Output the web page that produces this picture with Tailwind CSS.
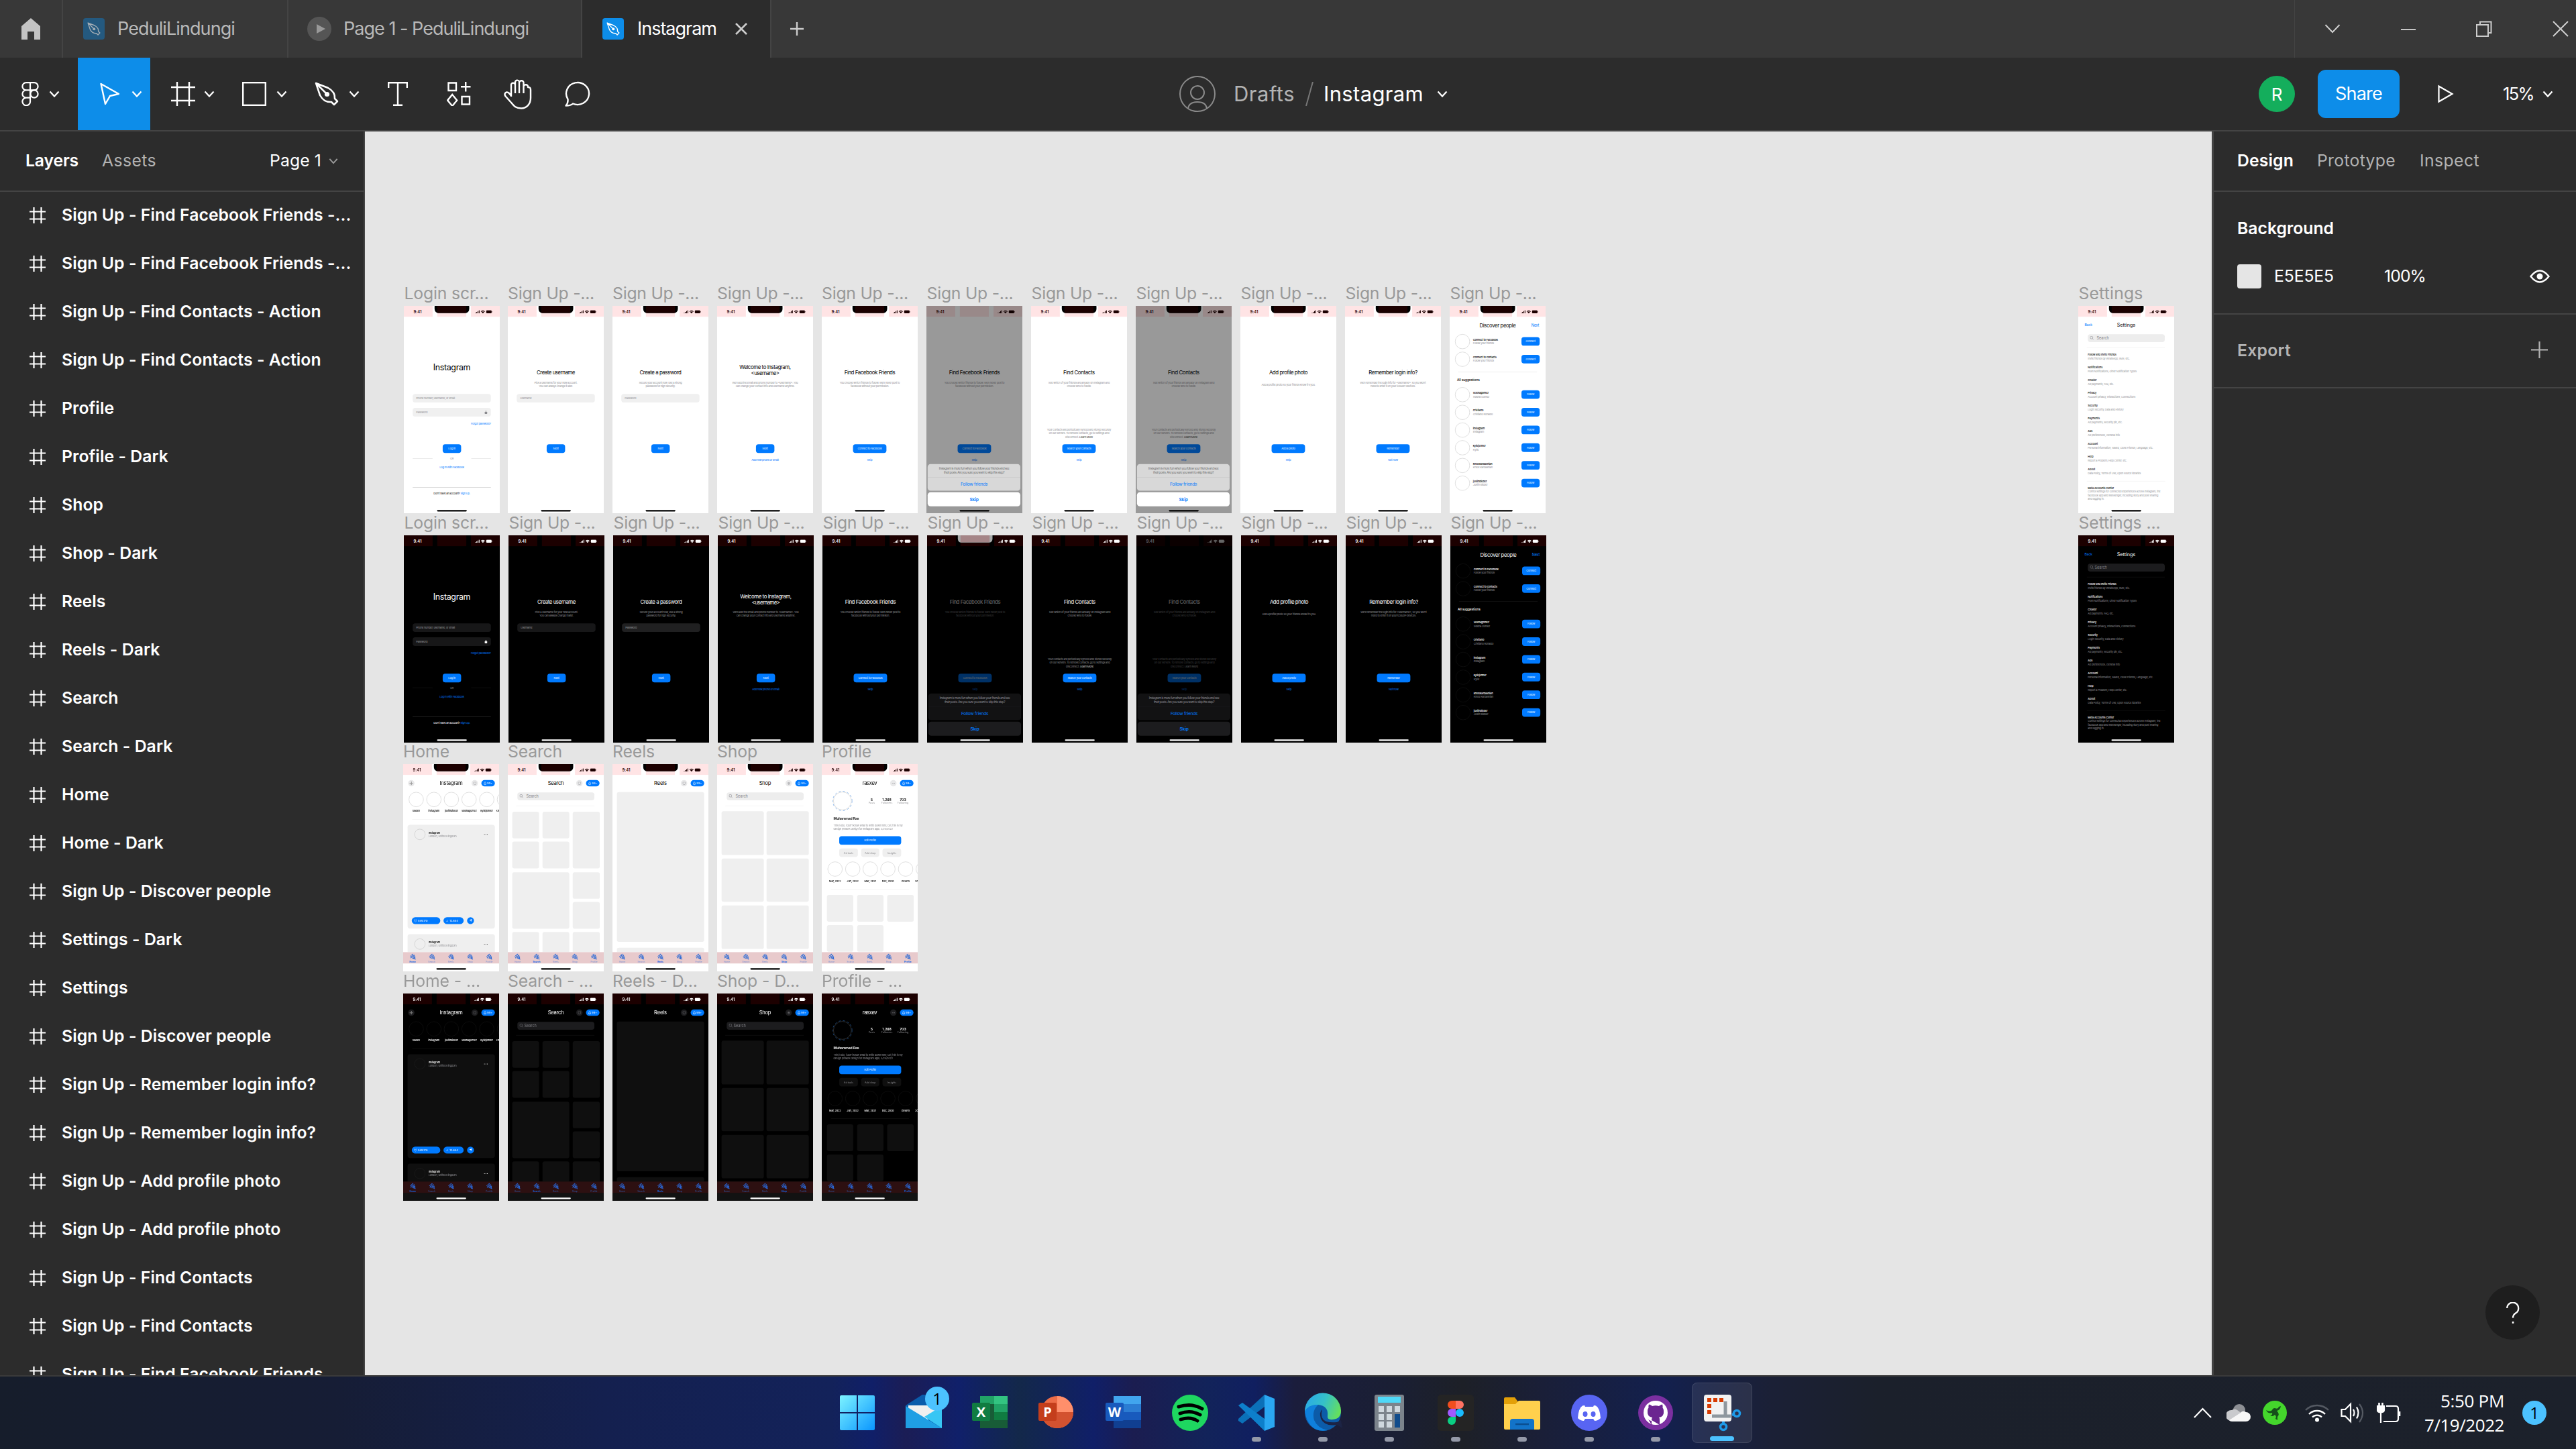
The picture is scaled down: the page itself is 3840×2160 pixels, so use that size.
<!DOCTYPE html>
<html lang="en">
<head>
<meta charset="utf-8">
<title>Instagram – Figma</title>
<script src="https://cdn.jsdelivr.net/npm/@tailwindcss/browser@4"></script>
</head>
<body class="w-[3840px] h-[2160px] overflow-hidden bg-[#2c2c2c] font-['Inter',sans-serif] text-white text-[24.75px] flex flex-col whitespace-nowrap">

<svg class="hidden">
  <symbol id="chev" viewBox="0 0 16 16"><path d="M1.5 4.5 8 11.5 14.5 4.5" fill="none" stroke="currentColor" stroke-width="2.3"/></symbol>
  <symbol id="hash" viewBox="0 0 36 36"><path d="M9 0V36M27 0V36M0 8H36M0 28H36" fill="none" stroke="currentColor" stroke-width="2.4"/></symbol>
  <symbol id="hash-sm" viewBox="0 0 24 24"><path d="M6.500 0V24M17.500 0V24M0 6.500H24M0 17.500H24" fill="none" stroke="currentColor" stroke-width="2.200"/></symbol>
  <symbol id="pen" viewBox="0 0 36 36"><path d="M2 2 20 9Q31 15 30 25L34 29 29 34 25 30Q14 31 8 20ZM2 2 17 17" fill="none" stroke="currentColor" stroke-width="2.5" stroke-linejoin="round"/><circle cx="18.500" cy="18.500" r="3.600" fill="currentColor"/></symbol>
  <symbol id="bars" viewBox="0 0 70 14"><path d="M0 10h3v3H0zM5 7.500h3V13H5zM10 4h3v9h-3zM15 1h3v12h-3z" fill="currentColor"/><path d="M23 5.500Q31.500-2.500 40 5.500L38 7.500Q31.500 1.500 25 7.500ZM26.500 9Q31.500 4 36.500 9L31.500 14Z" fill="currentColor"/><rect x="45" y="1" width="22" height="12" rx="3.500" fill="currentColor"/><rect x="68" y="5" width="1.500" height="4" fill="currentColor"/></symbol>
  <symbol id="mag" viewBox="0 0 16 16"><circle cx="6.500" cy="6.500" r="5" fill="none" stroke="currentColor" stroke-width="1.400"/><path d="M10 10 15 15" stroke="currentColor" stroke-width="1.400"/></symbol>
  <symbol id="squig" viewBox="0 0 26 26"><path d="M2 13 12 3Q16 1 13 6L5 17Q4 21 8 17L18 7Q21 6 19 10L12 19Q11 22 14 20M15 15H21M15 20H18M18 15V24M22 12V24H25" fill="none" stroke="currentColor" stroke-width="2.700"/></symbol>
</svg>

<!-- window tabs -->
<header class="h-[86px] shrink-0 bg-[#383838] flex items-stretch text-[27px] text-[#b8b8b8]">
  <div class="w-[94px] border-r-2 border-[#444] flex items-center justify-center">
    <svg class="w-7 h-8" viewBox="0 0 28 32"><path d="M14 0 28 12V32H19V20H9V32H0V12Z" fill="#c4c4c4"/></svg>
  </div>
  <div class="w-[336px] border-r-2 border-[#444] flex items-center pl-[30px] gap-[19px]">
    <span class="size-8 rounded shrink-0 bg-[#24597f] text-[#a3adb5] flex items-center justify-center"><svg class="size-5"><use href="#pen"/></svg></span><span data-w="175" data-s="27">PeduliLindungi</span>
  </div>
  <div class="w-[438px] border-r-2 border-[#444] flex items-center pl-7 gap-[18px]">
    <svg class="size-9 shrink-0" viewBox="0 0 36 36"><circle cx="18" cy="18" r="18" fill="#555"/><path d="M14 11 27 18 14 25Z" fill="#999"/></svg><span data-w="276" data-s="27">Page 1 - PeduliLindungi</span>
  </div>
  <div class="w-[280px] bg-[#2c2c2c] text-white flex items-center pl-[30px]">
    <span class="size-8 rounded shrink-0 bg-[#0d8de9] flex items-center justify-center"><svg class="size-5"><use href="#pen"/></svg></span><span class="w-[166px] pl-5"><span data-w="118" data-s="27">Instagram</span></span>
    <svg class="size-[18px] shrink-0" viewBox="0 0 18 18"><path d="M1 1 17 17M17 1 1 17" stroke="#ccc" stroke-width="2.600"/></svg>
  </div>
  <div class="w-[78px] border-l-2 border-[#444] flex items-center justify-center"><svg class="size-5" viewBox="0 0 20 20"><path d="M10 0V20M0 10H20" stroke="#ccc" stroke-width="2.400"/></svg></div>
  <div class="flex-1"></div>
  <div class="w-[420px] border-l border-[#444] flex items-center pl-[44px] gap-[89.500px] text-[#ccc]">
    <svg class="size-6 shrink-0" viewBox="0 0 24 24"><path d="M1.500 6 12 17 22.500 6" fill="none" stroke="currentColor" stroke-width="2"/></svg>
    <svg class="size-[23px] shrink-0" viewBox="0 0 24 24"><path d="M0 12.500H23" stroke="currentColor" stroke-width="2"/></svg>
    <svg class="size-6 shrink-0" viewBox="0 0 24 24"><path d="M1 6H18V23H1ZM6 6V1.500H22.500V18H18" fill="none" stroke="currentColor" stroke-width="2"/></svg>
    <svg class="size-6 shrink-0" viewBox="0 0 24 24"><path d="M1 1 23 23M23 1 1 23" stroke="currentColor" stroke-width="2"/></svg>
  </div>
</header>

<!-- toolbar -->
<nav class="h-[110px] shrink-0 border-b-2 border-[#444] flex items-center">
  <div class="w-[116px] flex items-center pl-8 gap-[15px]">
    <svg class="w-[26px] h-9" viewBox="0 0 26 36"><path d="M7 1.200H19A5.600 5.600 0 0 1 19 12.400H7A5.600 5.600 0 0 1 7 1.200ZM13 1.200V29A5.800 5.800 0 1 1 7 23.600H13M7 12.400A5.600 5.600 0 0 0 7 23.600" fill="none" stroke="#fff" stroke-width="2.200"/><circle cx="19" cy="18" r="5.600" fill="none" stroke="#fff" stroke-width="2.200"/></svg>
    <svg class="size-4"><use href="#chev"/></svg>
  </div>
  <div class="w-[108px] h-full bg-[#0d8de9] flex items-center pl-[33px] gap-[17px]">
    <svg class="w-[30px] h-[34px]" viewBox="0 0 30 34"><path d="M1.500 2 28 17 15 20 8 32Z" fill="none" stroke="#fff" stroke-width="2.400" stroke-linejoin="round"/></svg>
    <svg class="size-4"><use href="#chev"/></svg>
  </div>
  <div class="w-[108px] flex items-center pl-[31px] gap-[13px]"><svg class="size-9"><use href="#hash"/></svg><svg class="size-4"><use href="#chev"/></svg></div>
  <div class="w-[108px] flex items-center pl-[29px] gap-[15px]"><svg class="size-9" viewBox="0 0 36 36"><rect x="1.200" y="1.200" width="33.600" height="33.600" fill="none" stroke="#fff" stroke-width="2.400"/></svg><svg class="size-4"><use href="#chev"/></svg></div>
  <div class="w-[108px] flex items-center pl-[29px] gap-[15px]"><svg class="size-9"><use href="#pen"/></svg><svg class="size-4"><use href="#chev"/></svg></div>
  <div class="flex items-center pl-[30px] gap-[58px]">
    <svg class="w-[30px] h-9" viewBox="0 0 30 36"><path d="M1.200 9V1.200H28.800V9M15 1.200V34.800M8 34.800H22" fill="none" stroke="#fff" stroke-width="2.400"/></svg>
    <svg class="size-9" viewBox="0 0 36 36"><path d="M2.500 1.500H14V13H2.500ZM22.500 22H34V33.500H22.500ZM8.200 19 15.200 27.500 8.200 36 1.200 27.500ZM28.200 0V14.500M21 7.200H35.500" fill="none" stroke="#fff" stroke-width="2.400"/></svg>
    <svg class="w-[42px] h-[46px] -ml-[9px]" viewBox="0 0 42 46"><path d="M11 27V10.500A3 3 0 0 1 17 9V5A3.200 3.200 0 0 1 23 4.500V6A3.200 3.200 0 0 1 29.500 7V12A3.200 3.200 0 0 1 36 13C40 13 40 15 40 17V29C40 38 34 44.500 26 44.500C18 44.500 15 41 12 37L3 27C-1 22 4 18.500 8 22L11 26M17 9V22M23 6V22M29.500 10V22" fill="none" stroke="#fff" stroke-width="2.400" stroke-linejoin="round"/></svg>
    <svg class="w-10 h-[38px] -ml-[9px]" viewBox="0 0 40 38"><path d="M4.500 27A17 16.500 0 1 1 12 33.500Q9 36.500 1.500 36.500 5 33 4.500 27Z" fill="none" stroke="#fff" stroke-width="2.400" stroke-linejoin="round"/></svg>
  </div>
  <div class="flex-1"></div>
  <div class="w-[402px] shrink-0 flex items-center text-[31px]">
    <svg class="size-[54px] shrink-0 mr-[27px]" viewBox="0 0 54 54" fill="none" stroke="#8a8a8a" stroke-width="2"><circle cx="27" cy="27" r="26"/><circle cx="27" cy="25" r="10"/><path d="M13 49Q14 39 27 39T41 49"/></svg>
    <span class="w-[92px] text-[#b3b3b3]"><span data-w="91" data-s="31">Drafts</span></span>
    <svg class="w-3 h-9 shrink-0 mx-[15px]" viewBox="0 0 12 36"><path d="M11 0 1 36" stroke="#777" stroke-width="2"/></svg>
    <span class="w-[149px]"><span data-w="149" data-s="31">Instagram</span></span>
    <svg class="size-4 shrink-0 ml-[20px]"><use href="#chev"/></svg>
  </div>
  <div class="w-[1207px] shrink-0"></div>
  <div class="w-[473px] shrink-0 flex items-center text-[27px]">
    <span class="size-[54px] shrink-0 rounded-full bg-[#14ae5c] flex items-center justify-center text-[26px]">R</span>
    <span class="ml-[34px] w-[122px] h-[72px] rounded-xl bg-[#0d8de9] flex items-center justify-center" ><span data-w="70" data-s="27">Share</span></span>
    <svg class="w-[24px] h-[28px] ml-[57px]" viewBox="0 0 24 28"><path d="M1.500 2.500 21.500 14 1.500 25.500Z" fill="none" stroke="#fff" stroke-width="2.200"/></svg>
    <span class="ml-[73px] w-[47px] text-[25.500px]"><span data-w="46" data-s="25.500">15%</span></span>
    <svg class="size-4 ml-[12px]"><use href="#chev"/></svg>
  </div>
</nav>

<main class="flex-1 min-h-0 flex">
  <!-- layers -->
  <aside class="w-[544px] border-r-2 border-[#444] flex flex-col overflow-hidden">
    <div class="h-[90px] shrink-0 border-b-2 border-[#444] flex items-center pl-[38px]">
      <span class="w-[79px] font-semibold"><span data-w="79" data-b="600">Layers</span></span>
      <span class="ml-[35px] text-[#b3b3b3]" data-w="81">Assets</span>
      <span class="ml-auto" data-w="77">Page 1</span>
      <svg class="size-3.5 shrink-0 ml-[11px] mr-[38px] text-[#999]"><use href="#chev"/></svg>
    </div>
    <div id="layers" class="flex-1 min-h-0 overflow-hidden font-semibold -mt-px"></div>
  </aside>
  <!-- canvas -->
  <section id="canvas" class="relative flex-1 bg-[#e5e5e5] overflow-hidden"></section>
  <!-- properties -->
  <aside class="w-[543px] border-l-[3px] border-[#444] relative">
    <div class="h-[90px] border-b-2 border-[#444] flex items-center pl-[35px] text-[#b3b3b3]">
      <span class="w-[119px] font-semibold text-white"><span data-w="84" data-b="600">Design</span></span><span class="w-[153px]"><span data-w="117">Prototype</span></span><span data-w="89">Inspect</span>
    </div>
    <div class="h-[183px] border-b-2 border-[#444] pl-[35px] pr-[39px] pt-[36px]">
      <div class="h-9 leading-9 font-semibold"><span data-w="144" data-b="600">Background</span></div>
      <div class="mt-[36px] h-9 flex items-center">
        <span class="size-9 rounded-sm bg-[#e5e5e5] mr-[19px]"></span><span class="w-[164px]"><span data-w="89">E5E5E5</span></span><span data-w="62">100%</span>
        <svg class="w-[30px] h-5 ml-auto" viewBox="0 0 30 20"><path d="M1.500 10Q15-7 28.500 10Q15 27 1.500 10Z" fill="none" stroke="#fff" stroke-width="2.400"/><circle cx="15" cy="10" r="4.500" fill="#fff"/></svg>
      </div>
    </div>
    <div class="h-[110px] border-b-2 border-[#444] flex items-center justify-between pl-[35px] pr-[42px] font-semibold text-[#b3b3b3]">
      <span data-w="80" data-b="600">Export</span>
      <svg class="size-[25px] -mt-1" viewBox="0 0 25 25"><path d="M12.500 0V25M0 12.500H25" stroke="#b3b3b3" stroke-width="2.200"/></svg>
    </div>
    <div class="absolute right-[54px] bottom-[53px] size-[81px] rounded-full bg-[#1e1e1e] flex items-center justify-center">
      <svg class="w-5 h-8" viewBox="0 0 20 32"><path d="M1.200 9A8.500 8.500 0 1 1 14 16.500Q10 19 10 23.500" fill="none" stroke="#fff" stroke-width="2.300"/><rect x="8.800" y="29" width="2.600" height="2.800" fill="#fff"/></svg>
    </div>
  </aside>
</main>

<!-- taskbar -->
<footer class="h-[110px] shrink-0 border-t-2 border-[#3a3a3a] relative flex items-center bg-[linear-gradient(90deg,#161d2b_0px,#161d35_500px,#14204f_900px,#13225a_1240px,#101f68_1300px,#1b1d55_1350px,#10206a_1430px,#13284a_1520px,#101f68_1630px,#1b1d50_1690px,#12235a_1800px,#101f60_1870px,#1b1d3c_1930px,#1a1f34_2080px,#1d2027_2180px,#1a1f38_2300px,#13204e_2480px,#1b2036_2640px,#1b202b_2800px,#1c212b_3840px)]">
  <div id="tasks" class="flex items-center ml-[1233px]"></div>
  <div class="ml-auto flex items-center text-white font-['Open_Sans','Noto_Sans',sans-serif] pr-11">
    <svg class="w-[27px] h-4" viewBox="0 0 27 16"><path d="M1 15 13.500 2 26 15" fill="none" stroke="#fff" stroke-width="2.200"/></svg>
    <svg class="w-9 h-7 ml-[22px]" viewBox="0 0 36 28"><circle cx="19" cy="10" r="9" fill="#8d8f94"/><path d="M8 10A8 8 0 0 1 16 10L30 20 6 26A8 8 0 0 1 8 10Z" fill="#c9cacd"/><path d="M4 25 21 14Q24 10 29 13A7 7 0 0 1 29 27H8Q5 27 4 25Z" fill="#f7f7f7"/></svg>
    <svg class="size-9 ml-[18px]" viewBox="0 0 36 36"><circle cx="18" cy="18" r="18" fill="#44d62c"/><path d="M18 11Q23 13 24 9L27 8Q26 14 21 15 26 20 22 24V29L19 27Q21 23 18 21 14 25 11 21 15 22 14 18 8 20 5 14 11 17 14 14 15 11 18 11Z" fill="#15501a"/></svg>
    <svg class="w-9 h-[30px] ml-[27px]" viewBox="0 0 36 30" fill="none" stroke="#fff" stroke-width="2.400"><path d="M1 11A24 24 0 0 1 35 11" stroke="#555a63"/><path d="M6 17A17 17 0 0 1 30 17M11 21.500A10 10 0 0 1 25 21.500"/><circle cx="18" cy="25.500" r="3" fill="#fff" stroke="none"/></svg>
    <svg class="w-[37px] h-[32px] ml-[17px]" viewBox="0 0 37 32" fill="none" stroke="#fff" stroke-width="2.200"><path d="M1.500 11H7L15 3V29L7 21H1.500Z"/><path d="M19 11Q22 16 19 21M24 7.500Q29 16 24 24.500"/><path d="M28 3Q38 16 28 30" stroke="#555a63"/></svg>
    <svg class="w-[37px] h-[32px] ml-[17px]" viewBox="0 0 37 32" fill="none" stroke="#fff" stroke-width="2.200"><path d="M14 6H28Q32 6 32 10V25Q32 29 28 29H10M6 14V31"/><path d="M1 6H11V12Q11 15 6 15.500Q1 15 1 12Z" fill="#fff"/><path d="M3.500 1V6M8.500 1V6M34 14V21" stroke-width="2.600"/></svg>
    <div class="ml-[27px] w-[126px] text-[26px] leading-[36px] text-right"><div><span data-w="95" data-s="26" data-ff="Open Sans">5:50 PM</span></div><div><span data-w="119" data-s="26" data-ff="Open Sans">7/19/2022</span></div></div>
    <span class="ml-[27px] size-9 rounded-full bg-[#4cc2ff] text-black text-[24px] leading-none flex items-center justify-center">1</span>
  </div>
</footer>

<script>
// tracking that makes a label as wide as its text box
const ctx = document.createElement('canvas').getContext('2d');
const probe = document.createElement('div');
function track(html, w, size, weight = 400, family = 'Inter') {
  if (!w) return '0px';
  probe.innerHTML = html;
  const t = probe.textContent;
  ctx.font = `${weight} ${size * 10}px "${family}"`;
  const v = (w - ctx.measureText(t).width / 10) / t.length;
  return Math.max(-size * .12, Math.min(size * .12, v)).toFixed(3) + 'px';
}
document.querySelectorAll('[data-w]').forEach(e => {
  e.style.letterSpacing = track(e.innerHTML, +e.dataset.w, +(e.dataset.s || 24.75), e.dataset.b || 400, e.dataset.ff || 'Inter');
});

// ---- layer list ----
const layers = ["Sign Up - Find Facebook Friends -...","Sign Up - Find Facebook Friends -...","Sign Up - Find Contacts - Action","Sign Up - Find Contacts - Action","Profile","Profile - Dark","Shop","Shop - Dark","Reels","Reels - Dark","Search","Search - Dark","Home","Home - Dark","Sign Up - Discover people","Settings - Dark","Settings","Sign Up - Discover people","Sign Up - Remember login info?","Sign Up - Remember login info?","Sign Up - Add profile photo","Sign Up - Add profile photo","Sign Up - Find Contacts","Sign Up - Find Contacts","Sign Up - Find Facebook Friends"];
document.getElementById('layers').innerHTML = layers.map(n =>
  `<div class="h-[72px] flex items-center pl-11 gap-6 whitespace-nowrap"><svg class="size-6 shrink-0"><use href="#hash-sm"/></svg><span class="tracking-[0.07px]">${n}</span></div>`).join('');

// ---- artboards, in 390x844 points ----
const BLUE = '#007aff';
const T = (x, y, s, txt, o = {}) => `<div class="absolute whitespace-nowrap leading-none -translate-y-1/2 ${o.a === 'c' ? '-translate-x-1/2' : o.a === 'r' ? '-translate-x-full' : ''}" style="left:${x}px;top:${y}px;font-size:${s}px;color:${o.c || 'inherit'};font-weight:${o.b || 400};letter-spacing:${track(txt, o.w, s, o.b)}">${txt}</div>`;
const R = (x, y, x2, y2, c, r = 0, inner = '') => `<div class="absolute flex items-center justify-center overflow-hidden leading-none whitespace-nowrap" style="left:${x}px;top:${y}px;width:${x2 - x}px;height:${y2 - y}px;background:${c};border-radius:${r}px">${inner}</div>`;
const C = (x, y, r, c) => `<div class="absolute rounded-full border-[1.5px]" style="left:${x - r}px;top:${y - r}px;width:${2 * r}px;height:${2 * r}px;border-color:${c}"></div>`;
const G = (id, x, y, w, h, c) => `<svg class="absolute" style="left:${x}px;top:${y}px;width:${w}px;height:${h}px;color:${c}"><use href="#${id}"/></svg>`;
const btn = (x, x2, y, txt, w) => R(x, y, x2, y + 35, BLUE, 10, `<span class="text-[11px] text-white/90" style="letter-spacing:${track(txt, w, 11, 400)}">${txt}</span>`);

function status(d, o) {
  const seg = d ? '#1c0000' : '#ffe4e5';
  let s = [[0, 117], [136, 254], [273, 391]].map(([a, b]) => R(a, 0, b, 43.5, seg)).join('');
  if (!d && !o.noNotch) s += R(125, -12, 266, 29, '#000', 16) + R(136, 0, 254, 28, '#1c0000');
  s += T(56, 24.5, 16, '9:41', { a: 'c', b: 600, w: 33, c: d ? '#fff' : '#2a0508' }) + G('bars', 290, 17, 70, 14, d ? '#fff' : '#1c0000');
  return s;
}
const home = d => R(135, 830, 256, 835.5, d ? '#fff' : '#000', 3);
const sub = d => d ? '#8e8e93' : '#939397';
const title = (l) => l.length === 1 ? T(195, 270, 21.5, l[0][0], { a: 'c', w: l[0][1] }) : T(195, 248, 21.5, l[0][0], { a: 'c', w: l[0][1] }) + T(195, 275, 21.5, l[1][0], { a: 'c', w: l[1][1] });
const desc = (l, d) => l.map((t, i) => T(195, (l.length === 1 ? 320 : 313) + i * 14.3, 11, t[0], { a: 'c', c: sub(d), w: t[1] })).join('');
const input = (y, t, w, d, bg) => R(36, y, 354, y + 35, bg || (d ? '#171718' : '#f0f0f0'), 10) + T(50, y + 17.5, 11, t, { c: d ? '#98989d' : '#939397', w });

const S = {
  login: d => T(195, 250, 34, 'Instagram', { a: 'c', w: 151 }) + input(357.5, 'Phone number, username, or email', 157, d) + input(415, 'Password', 46, d)
    + R(329, 431, 339, 439, d ? '#fff' : '#8a8a8e', 1.5) + R(331, 426, 337, 431, '#bbb', 3)
    + T(354, 479, 10.5, 'Forgot password?', { a: 'r', c: BLUE, w: 81 }) + btn(158, 233, 563, 'Log in', 29)
    + R(36, 619.5, 117, 621, d ? '#2a2a2a' : '#ccc') + R(274, 619.5, 354, 621, d ? '#2a2a2a' : '#ccc') + T(195, 620, 11, 'OR', { a: 'c', c: sub(d), w: 14 })
    + T(195, 658, 11, 'Log In With Facebook', { a: 'c', c: BLUE, w: 99 }) + R(36, 737, 354, 738.500, d ? '#2a2a2a' : '#ccc')
    + T(195, 763, 11, `Don't have an account? <span style="color:${BLUE}">Sign Up.</span>`, { a: 'c', w: 148 }),
  user: d => title([['Create username', 155]]) + desc([['Pick a username for your new account.', 174], ['You can always change it later.', 138]], d) + input(357.5, 'Username', 46, d) + btn(158, 233, 563, 'Next', 22),
  pass: d => title([['Create a password', 169]]) + desc([['Secure your account now, use a strong', 175], ['password for high security.', 120]], d) + input(357.5, 'Password', 46, d, d ? '#202021' : 0) + btn(158, 233, 563, 'Next', 22),
  welcome: d => title([['Welcome to Instagram,', 208], ['&lt;username&gt;', 114]]) + desc([["We'll add the email and phone number to &lt;username&gt;. You", 267], ['can change your contact info and username anytime.', 239]], d) + btn(158, 233, 563, 'Next', 22) + T(195, 627.5, 11, 'Add new phone or email', { a: 'c', c: BLUE, w: 110 }),
  fb: d => title([['Find Facebook Friends', 206]]) + desc([["You choose which friends to follow. We'll never post to", 244], ['facebook without your permission.', 155]], d) + btn(127, 263, 563, 'Connect to Facebook', 98) + T(195, 627.5, 11, 'Skip', { a: 'c', c: BLUE, w: 21 }),
  contacts: d => title([['Find Contacts', 128]]) + desc([['See which of your friends are already on Instagram and', 249], ['choose who to follow.', 98]], d)
    + T(195, 504, 11, 'Your contacts are periodically synced and stored securely', { a: 'c', c: sub(d), w: 260 }) + T(195, 518.5, 11, 'on our servers. To remove contacts, go to Settings and', { a: 'c', c: sub(d), w: 245 })
    + T(195, 533, 11, `disconnect. <span style="color:${d ? '#ddd' : '#333'}">Learn More</span>`, { a: 'c', c: sub(d), w: 111 }) + btn(127, 263, 563, 'Search your contacts', 98) + T(195, 627.5, 11, 'Skip', { a: 'c', c: BLUE, w: 21 }),
  photo: d => title([['Add profile photo', 156]]) + desc([["Add a profile photo so your friends know it's you.", 218]], d) + btn(127, 263, 563, 'Add a photo', 56) + T(195, 627.5, 11, 'Skip', { a: 'c', c: BLUE, w: 21 }),
  remember: d => title([['Remember login info?', 198]]) + desc([["We'll remember the login info for &lt;username&gt;, so you won't", 268], ['need to enter it on your iCloud® devices.', 182]], d) + btn(127, 263, 563, 'Remember', 50) + T(195, 627.5, 11, 'Not now', { a: 'c', c: BLUE, w: 40 }),
  discover: d => {
    let s = T(195, 80, 21, 'Discover people', { a: 'c', w: 147 }) + T(363, 80, 15, 'Next', { a: 'r', c: BLUE, w: 31 }) + R(35, 267.5, 355, 269, d ? '#2a2a2a' : '#ccc') + T(30, 301, 13, 'All suggestions', { b: 500, w: 92 });
    [['Connect to Facebook', 'Follow your friends', 144.600, 'Connect', 101, 85], ['Connect to contacts', 'Follow your friends', 216.500, 'Connect', 95, 85], ['selenagomez', 'Selena Gomez', 361, 'Follow', 63, 66], ['cristiano', 'Cristiano Ronaldo', 433, 'Follow', 42, 80], ['instagram', 'Instagram', 505, 'Follow', 47, 44], ['kyliejenner', 'Kylie', 577, 'Follow', 51, 23], ['khloekardashian', 'Khloe Kardashian', 648.500, 'Follow', 78, 79], ['justinbieber', 'Justin Bieber', 720.500, 'Follow', 56, 59]]
      .forEach(([a, b, y, l, w, w2]) => s += C(52, y, 30, d ? '#222' : '#aaa') + T(95, y - 7, 11, a, { b: 500, w }) + T(95, y + 7.500, 11, b, { c: sub(d), w: w2 }) + btn(292, 366, y - 18, l, l === 'Connect' ? 40 : 30));
    return s;
  },
  settings: d => {
    let s = T(26, 77, 14, 'Back', { c: BLUE, w: 31 }) + T(195, 77, 19.500, 'Settings', { a: 'c', w: 75 }) + search(d) + R(35, 168.500, 352, 170, d ? '#222' : '#e5e5e5');
    [['Follow and Invite Friends', 'Invite friends by WhatsApp, SMS, etc.', 116, 170], ['Notifications', 'Push Notifications, Other Notification Types', 60, 198], ['Creator', 'Ad payments, FAQ, etc.', 36, 105], ['Privacy', 'Account privacy, Interactions, Connections', 35, 193], ['Security', 'Login Security, Data and History', 40, 145], ['Payments', 'Ad payments, Security pin, etc.', 48, 140], ['Ads', 'Ad preferences, General info', 19, 130], ['Account', 'Personal information, Saved, Close Friends, Language, etc.', 41, 265], ['Help', 'Report a Problem, Help Center, etc.', 23, 159], ['About', 'Data Policy, Terms of Use, Open source libraries', 30, 215]]
      .forEach(([a, b, w, w2], i) => s += T(39, 200 + i * 51.850, 10.500, a, { b: 500, w }) + T(39, 215 + i * 51.850, 10.500, b, { c: sub(d), w: w2 }));
    return s + R(35, 711.500, 354, 713, d ? '#222' : '#e5e5e5') + T(39, 742, 10.500, 'Meta Accounts Center', { b: 500, w: 106 }) + T(39, 756.500, 10.500, 'Control settings for connected experiences across Instagram, the', { c: sub(d), w: 295 }) + T(39, 771.500, 10.500, 'facebook app and Messenger, including story and post sharing', { c: sub(d), w: 286 }) + T(39, 786, 10.500, 'and logging in.', { c: sub(d), w: 66 });
  },
  home: d => {
    let s = head('Instagram', 93, d, 1, 'm');
    [['rasxev', 30], ['instagram', 45], ['justinbieber', 54], ['selenagomez', 62], ['kyliejenner', 50]].forEach(([n, w], i) => s += C(53 + i * 71.700, 144, 30, d ? '#222' : '#aaa') + T(53 + i * 71.700, 192, 10.500, n, { a: 'c', b: 500, w }));
    s += C(411.5, 144, 30, d ? '#222' : '#aaa') + T(378, 192, 10.500, 'kh', { b: 500 });
    s += R(37, 223.500, 355, 225, d ? '#222' : '#e5e5e5') + R(18, 247, 373, 669, card(d), 10) + R(18, 692, 373, 810, card(d), 10);
    [286, 731.500].forEach(y => s += C(68, y, 22, d ? '#2a2a2a' : '#aaa') + T(103, y - 6, 10.500, 'Instagram', { b: 500, w: 47 }) + T(103, y + 8, 10.500, 'London, United Kingdom', { c: sub(d), w: 114 }) + R(329, y - 1, 332, y + 2, d ? '#fff' : '#333', 2) + R(335, y - 1, 338, y + 2, d ? '#fff' : '#333', 2) + R(341, y - 1, 344, y + 2, d ? '#fff' : '#333', 2));
    s += R(35, 623, 151, 651, BLUE, 14) + `<svg class="absolute left-[44px] top-[631px] size-3" viewBox="0 0 12 12"><path d="M6 11 1 6Q0 1 3.500 1.500L6 3.500 8.500 1.500Q12 1 11 6Z" fill="none" stroke="#fff" stroke-width="1.300"/></svg>` + T(60, 637, 11, '589.170', { c: '#fff', w: 40 }) + R(164, 623, 246, 651, BLUE, 14) + `<svg class="absolute left-[174px] top-[632px] size-2.5" viewBox="0 0 12 12"><path d="M6 1V6M2 11Q6 3 10 11" fill="none" stroke="#fff" stroke-width="1.600"/></svg>` + T(189, 637, 11, '12.654', { c: '#fff', w: 34 }) + R(260, 623, 288, 651, BLUE, 14) + `<svg class="absolute left-[268px] top-[630px] size-3" viewBox="0 0 12 12"><path d="M0 5 12 0 8 12 6 6Z" fill="#fff"/></svg>`;
    return s + tabs(0, d);
  },
  search: d => head('Search', 64, d, 0, 'm') + search(d) + R(33, 168.500, 352, 170, d ? '#222' : '#e5e5e5') + grid([[18, 194, 127, 302], [141, 194, 250, 302], [264, 194, 374, 424], [18, 315, 127, 424], [141, 315, 250, 424], [18, 440, 250, 670], [264, 440, 374, 548], [264, 561, 374, 670], [18, 683, 127, 790], [141, 683, 250, 790], [264, 683, 374, 790]], d) + tabs(1, d),
  reels: d => head('Reels', 51, d, 0, 'm') + grid([[18, 114, 373, 723], [18, 747, 373, 790]], d) + tabs(2, d),
  shop: d => head('Shop', 48, d, 0, 's') + search(d) + R(33, 168.500, 352, 170, d ? '#222' : '#e5e5e5') + grid([[18, 192, 190, 370], [201, 192, 373, 370], [18, 384, 190, 560], [201, 384, 373, 560], [18, 575, 190, 752], [201, 575, 373, 752]], d) + tabs(3, d),
  profile: d => {
    let s = head('rasxev', 59, d, 0, 'd') + `<svg class="absolute left-[43px] top-[109px] size-[82px]" viewBox="0 0 82 82"><circle cx="41" cy="41" r="39.500" fill="none" stroke="#2f80e0" stroke-width="1.500" stroke-dasharray="8 9"/></svg>` + C(84, 150, 37, d ? '#777' : '#aaa');
    [[203, '5', 'Posts', 26], [265, '1.268', 'Followers', 45], [330, '703', 'Following', 45]].forEach(([x, a, b, w]) => s += T(x, 143.500, 14, a, { a: 'c', b: 600 }) + T(x, 157.500, 10, b, { a: 'c', c: sub(d), w }));
    s += T(48, 222, 14, 'Muhammad Ras', { b: 600, w: 103 }) + T(48, 250, 10.500, "This is bio, i don't know what to write down here, but, this is my", { c: sub(d), w: 281 }) + T(48, 264, 10.500, 'design (rework design for Instagram app). 3/25/2022', { c: sub(d), w: 241 }) + btn(71, 323, 293, 'Edit Profile', 48);
    [[71, 147, 'Ad tools'], [160, 234, 'Add shop'], [247, 323, 'Insights']].forEach(([a, b, t]) => s += R(a, 343, b, 378, card(d), 10, `<span class="text-[10px] text-[#8a8a8e]">${t}</span>`));
    ['Mar, 2022', 'Jun, 2022', 'Mar, 2021', 'Dec, 2020', 'GEARS'].forEach((n, i) => s += C(54 + i * 71.700, 427, 30, d ? '#222' : '#aaa') + T(54 + i * 71.700, 478, 10.500, n, { a: 'c', b: 500, w: i < 4 ? 48 : 34 }));
    s += C(412.5, 427, 30, d ? '#222' : '#aaa') + T(379, 478, 10.500, '20', { b: 500 });
    return s + R(37, 508.500, 355, 510, d ? '#222' : '#e5e5e5') + grid([[21, 532, 128, 641], [144, 532, 251, 641], [266, 532, 374, 641], [21, 655, 128, 763], [144, 655, 251, 763]], d) + tabs(4, d);
  }
};
function card(d) { return d ? '#0f0f0f' : '#efefef'; }
function grid(a, d) { return a.map(r => R(...r, card(d), 8)).join(''); }
function search(d) { return R(39, 114.500, 352, 147, d ? '#1c1c1e' : '#ededed', 10) + G('mag', 47, 122, 17, 17, '#808085') + T(d ? 67 : 75, 131, 15, 'Search', { c: '#808085', w: 50 }); }
function head(t, w, d, plus, k) {
  const bg = d ? '#1c1c1e' : '#e9e9ea', fg = d ? '#777' : '#999';
  const glyph = k === 'd' ? '<circle cx="2" cy="6" r="1.300" fill="currentColor"/><circle cx="6" cy="6" r="1.300" fill="currentColor"/><circle cx="10" cy="6" r="1.300" fill="currentColor"/>' : k === 's' ? '<path d="M0 4H12M6 1V6M3 6H9L8 10H4Z" fill="none" stroke="currentColor" stroke-width="1.200"/>' : '<path d="M1 1H11V7Q10 11 6 11Q2 11 1 7Z" fill="none" stroke="currentColor" stroke-width="1.200"/>';
  let s = T(195, 78, 21, t, { a: 'c', w }) + R(278, 65, 304, 91, bg, 13, `<svg class="size-[13px] text-[#8a8a8e]" viewBox="0 0 12 12">${glyph}</svg>`);
  if (plus) s += R(20, 65, 46, 91, bg, 13) + R(32, 71, 34.500, 85, fg) + R(26, 77, 40, 79.500, fg);
  return s + R(318, 65, 373, 91, BLUE, 13) + `<svg class="absolute left-[327px] top-[70px] w-3 h-4" viewBox="0 0 12 16"><path d="M1 12Q3 9 3 5Q6 0 9 5Q9 9 11 12ZM4 14H8" fill="none" stroke="#fff" stroke-width="1.500"/></svg>` + T(342, 78, 10.500, '99+', { c: '#fff', w: 22 });
}
function tabs(on, d) {
  return R(0, 765, 391, 844, d ? '#121212' : '#fff') + R(0, 765, 391, 811, d ? '#2d1011' : '#e8cacc')
    + ['Home', 'Search', 'Reels', 'Shop', 'Profile'].map((n, i) => G('squig', 26 + i * 77.800, 770, 26, 26, d ? '#2a6be0' : '#2467d6') + T(39 + i * 77.800, 804, 9, n, { a: 'c', c: on === i ? '#1667e8' : d ? '#2d5cb0' : '#6f8fd6', b: on === i ? 700 : 400 })).join('');
}
function sheet(d) {
  return R(0, 0, 391, 844, d ? 'rgba(0,0,0,.6)' : 'rgba(0,0,0,.4)');
}
function sheetBody(d) {
  const g = d ? '#8e8e93' : '#6c6c6c';
  return R(5, 643, 382, 752, d ? '#121213' : '#d8d8d8', 12) + R(5, 696.500, 382, 698, d ? '#1c1c1e' : '#b8b8b8') + T(194, 663, 12.500, 'Instagram is more fun when you follow your friends and see', { a: 'c', c: g, w: 285 }) + T(194, 679, 12.500, 'their posts. Are you sure you want to skip this step?', { a: 'c', c: g, w: 246 })
    + T(194, 725, 18, 'Follow friends', { a: 'c', c: BLUE, w: 110 }) + R(5, 758, 382, 815, d ? '#1c1c1e' : '#fff', 12) + T(194, 787, 18, 'Skip', { a: 'c', c: BLUE, b: 600, w: 36 });
}
function frame(x, y, name, key, d, o = {}) {
  const act = o.act, st = status(d, o);
  let body = (o.brightBar ? '' : st) + S[key](d);
  if (act) body += sheet(d) + (o.brightBar ? st : '') + sheetBody(d);
  if (o.peek) body += R(125, -12, 266, 29, '#a9a9a9', 14) + R(136, 0, 254, 27, '#a58587');
  body += home(d);
  return `<div class="absolute whitespace-nowrap leading-none text-[24.75px] text-[#999]" style="left:${x + .5 - 544}px;top:${y - 31 - 196}px;letter-spacing:${track(name[0], name[1], 24.75)}">${name[0]}</div>
  <div class="absolute w-[143px] h-[309px] overflow-hidden ${d ? 'bg-black text-white' : 'bg-white text-black'}" style="left:${x - 544}px;top:${y - 196}px"><div class="relative w-[390px] h-[844px] origin-top-left scale-[0.3665]">${body}</div></div>`;
}
const L = [['Login scr...', 126], ['Sign Up -...', 129]];
const row = ['login', 'user', 'pass', 'welcome', 'fb', 'fb', 'contacts', 'contacts', 'photo', 'remember', 'discover'];
const x1 = [602, 756.5, 912.5, 1068.5, 1224.5, 1381, 1537, 1693, 1849, 2005, 2161];
let out = '';
row.forEach((k, i) => {
  const act = i === 5 || i === 7;
  out += frame(x1[i], 456, L[i ? 1 : 0], k, 0, { act, noNotch: i === 5 });
  out += frame(602 + i * 156, 797.5, L[i ? 1 : 0], k, 1, { act, brightBar: i === 5, peek: i === 5 });
});
out += frame(3098, 456, ['Settings', 96], 'settings', 0) + frame(3098, 797.5, ['Settings ...', 122], 'settings', 1);
[['home', 'Home', 69, 'Home - ...', 115], ['search', 'Search', 81, 'Search - ...', 127], ['reels', 'Reels', 63, 'Reels - D...', 127], ['shop', 'Shop', 60, 'Shop - D...', 123], ['profile', 'Profile', 74, 'Profile - ...', 120]].forEach(([k, a, w, b, w2], i) => {
  out += frame(600.500 + i * 156, 1139, [a, w], k, 0) + frame(600.500 + i * 156, 1480.500, [b, w2], k, 1);
});
document.getElementById('canvas').innerHTML = out;

// ---- taskbar icons, 54x54 each ----
const office = (c, l, shape) => shape + `<rect x="0" y="17" width="27" height="27" rx="2" fill="${c}"/><text x="13.500" y="38" text-anchor="middle" font-family="Open Sans" font-weight="700" font-size="20" fill="#fff">${l}</text>`;
const I = [
  [`<defs><linearGradient id="w" x1="0" y1="0" x2="1" y2="1"><stop offset="0" stop-color="#7df3ff"/><stop offset="1" stop-color="#0a96ff"/></linearGradient></defs><path d="M3 1H26V26H1V3Q1 1 3 1ZM28 1H51Q53 1 53 3V26H28ZM1 28H26V53H3Q1 53 1 51ZM28 28H53V51Q53 53 51 53H28Z" fill="url(#w)"/>`, 0],
  [`<path d="M0 16 25 0H30L54 16V50H0Z" fill="#0a5cab"/><path d="M4 16H50V30L27 40 4 24Z" fill="#f0f0f0"/><path d="M0 17 54 50H0Z" fill="#1f9fe4"/><path d="M28 33 54 17V50Z" fill="#38c6f4"/><circle cx="47" cy="6" r="18" fill="#4cc2ff"/><text x="47" y="15" text-anchor="middle" font-family="Open Sans" font-size="24" fill="#000">1</text>`, 0],
  [office('#107c41', 'X', `<path d="M12 2H33V14H12Z" fill="#21a366"/><path d="M33 2H53V14H33Z" fill="#33c481"/><path d="M12 14H33V38H12Z" fill="#185c37"/><path d="M33 14H53V26H33Z" fill="#21a366"/><path d="M33 26H53V38H33Z" fill="#107c41"/><path d="M12 38H53V50H12Z" fill="#185c37"/>`).replace('y="17"', 'y="12"').replace('y="38" text', 'y="33" text'), 0],
  [office('#c43e1c', 'P', `<circle cx="28" cy="26" r="24" fill="#ed6c47"/><path d="M28 2A24 24 0 0 1 52 26H28Z" fill="#ff8f6b"/><path d="M4 26H52A24 24 0 0 1 4 26Z" fill="#d35230"/>`).replace('y="17"', 'y="12"').replace('y="38" text', 'y="33" text'), 0],
  [office('#185abd', 'W', `<path d="M12 2H53V14H12Z" fill="#41a5ee"/><path d="M12 14H53V26H12Z" fill="#2b7cd3"/><path d="M12 26H53V38H12Z" fill="#185abd"/><path d="M12 38H53V50H12Z" fill="#103f91"/>`).replace('y="17"', 'y="12"').replace('y="38" text', 'y="33" text'), 0],
  [`<circle cx="27" cy="27" r="27" fill="#1ed760"/><path d="M10 18Q30 12 45 21M12 28Q28 22 42 30M13 37Q27 32 38 39" fill="none" stroke="#000" stroke-width="5" stroke-linecap="round"/>`, 0],
  [`<path d="M39 0V18L6 43 0 39V36Z" fill="#0b70b8"/><path d="M0 16 6 12 39 36V54Z" fill="#0d7fcb"/><path d="M39 0 54 6V48L39 54Z" fill="#2aa7f2"/>`, 1],
  [`<defs><linearGradient id="e" x1="0" x2="1" y1=".3" y2=".6"><stop offset="0" stop-color="#2aa9e6"/><stop offset=".5" stop-color="#35c1c8"/><stop offset="1" stop-color="#66e05a"/></linearGradient></defs><circle cx="27" cy="27" r="27" fill="#0c5ba8"/><path d="M0 25A27 27 0 0 1 54 24Q54 36 42 37 33 38 34 32 36 17 20 15 6 15 0 25Z" fill="url(#e)"/><path d="M0 25Q6 14 20 15 10 24 14 38 19 50 34 53 6 58 0 25Z" fill="#0f80dc"/><path d="M26 22Q20 44 48 41L54 38 56 50 48 45Q30 48 24 36 21 26 26 22Z" fill="#1c2445"/>`, 1],
  [`<rect x="5" y="0" width="44" height="54" rx="3" fill="#7c848c"/><rect x="10" y="3" width="34" height="9" fill="#4fd8f7"/><path d="M11 17h8v9h-8zM23 17h8v9h-8zM35 17h8v9h-8zM11 29h8v9h-8zM23 29h8v9h-8zM11 40h8v9h-8zM23 40h8v9h-8z" fill="#cfd8de"/><rect x="35" y="29" width="8" height="20" fill="#104c8c"/>`, 1],
  [`<rect width="54" height="54" rx="5" fill="#242424"/><path d="M27 9H21A6 6 0 0 0 21 21H27Z" fill="#f24e1e"/><path d="M27 9H33A6 6 0 0 1 33 21H27Z" fill="#ff7262"/><path d="M27 21H21A6 6 0 0 0 21 33H27Z" fill="#a259ff"/><circle cx="33" cy="27" r="6" fill="#1abcfe"/><path d="M21 33H27V39A6 6 0 1 1 21 33Z" fill="#0acf83"/>`, 1],
  [`<path d="M0 6Q0 4 2 4H16L22 12V20H0Z" fill="#e3a008"/><path d="M22 9H52Q54 9 54 11V50Q54 52 52 52H2Q0 52 0 50V14H17Z" fill="#ffd04d"/><path d="M9 52V40Q9 36 13 36H41Q45 36 45 40V52Z" fill="#1273c9"/><path d="M17 44H37" stroke="#0b4f91" stroke-width="2.500"/>`, 1],
  [`<circle cx="27" cy="27" r="27" fill="#5865f2"/><path d="M20 16 17 16.500Q11 20 10 35 14 39 19 39L21 36H33L35 39Q40 39 44 35 43 20 37 16.500L34 16 33 18H21Z" fill="#fff"/><ellipse cx="21" cy="29" rx="3.500" ry="4" fill="#5865f2"/><ellipse cx="33" cy="29" rx="3.500" ry="4" fill="#5865f2"/>`, 1],
  [`<circle cx="27" cy="27" r="26" fill="#7b2fa0"/><circle cx="27" cy="27" r="18" fill="#fff"/><path d="M21 45V39Q17 39 15 35M33 45V37Q33 35 32 34 40 33 39 24 39 21 37.500 19.500 38 17 37 14.500 34 15 32 17 27 15.500 22 17 20 15 17 14.500 16 17 16.500 19.500 15 21 15 24 14 33 22 34 21 36 21 38Z" fill="#6b2590"/>`, 1],
  [`<rect x="0" y="0" width="41" height="40" rx="4" fill="#f2f2f2"/><path d="M5 5h6v6H5zM14 5h6v6h-6zM23 5h6v6h-6zM5 14h6v6H5zM5 23h6v6H5z" fill="#d83b01"/><path d="M32 10V32M12 32H40" stroke="#8e979e" stroke-width="5"/><path d="M29 40V44M42 30 46 29" stroke="#1e9be8" stroke-width="4"/><circle cx="29" cy="48" r="4.500" fill="none" stroke="#1e9be8" stroke-width="3.500"/><circle cx="49" cy="28" r="4.500" fill="none" stroke="#1e9be8" stroke-width="3.500"/>`, 2]
];
document.getElementById('tasks').innerHTML = I.map(([s, m], i) =>
  `<div class="relative w-[90px] h-[90px] mr-[9.150px] shrink-0 rounded-lg flex items-center justify-center ${m === 2 ? 'bg-white/8 border border-white/10' : ''}"><svg class="size-[54px] overflow-visible" viewBox="0 0 54 54">${s}</svg>${m ? `<span class="absolute bottom-[2px] left-1/2 -translate-x-1/2 h-[7px] rounded-full ${m === 2 ? 'w-9 bg-[#4cc2ff]' : 'w-3.5 bg-[#9499a8]'}"></span>` : ''}</div>`).join('');
</script>
</body>
</html>
